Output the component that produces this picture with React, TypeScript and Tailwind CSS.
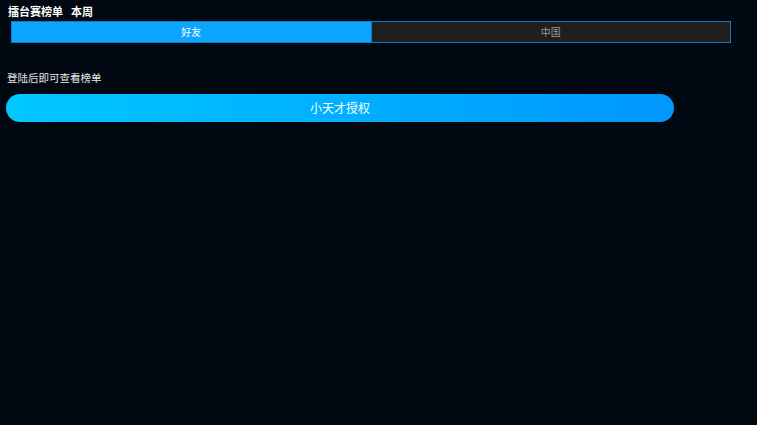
import { useState } from 'react';

type Scope = 'friends' | 'china';

const TABS: { id: Scope; label: string }[] = [
  { id: 'friends', label: '好友' },
  { id: 'china', label: '中国' },
];

export default function App() {
  const [scope, setScope] = useState<Scope>('friends');

  return (
    <div
      className="w-[757px] h-[425px] bg-[#020812] text-white flex flex-col overflow-hidden"
      style={{ fontFamily: '"Noto Sans CJK SC", "Noto Sans", sans-serif' }}
    >
      {/* ── Header ── */}
      <div className="pl-2 pt-[1px] h-[21px] flex items-center gap-[8px] text-[11px] font-bold leading-none">
        <span>擂台赛榜单</span>
        <span>本周</span>
      </div>

      {/* ── Scope tabs ── */}
      <div className="ml-[11px] w-[720px] h-[22px] flex border border-[#0b7cc8]">
        {TABS.map((tab) => {
          const active = scope === tab.id;
          return (
            <button
              key={tab.id}
              onClick={() => setScope(tab.id)}
              className={
                active
                  ? 'flex-1 flex items-center justify-center text-[10px] leading-none bg-[#0ea5fe] text-white'
                  : 'flex-1 flex items-center justify-center text-[10px] leading-none bg-[#1f1f1f] text-[#9a9a9a] border-l border-[#0b7cc8]'
              }
            >
              {tab.label}
            </button>
          );
        })}
      </div>

      {/* ── Login prompt ── */}
      <div className="mt-[30px] pl-[7px] text-[10.5px] leading-none text-[#e6e6e6]">登陆后即可查看榜单</div>

      <button className="mt-[10px] ml-[6px] w-[668px] h-[28px] rounded-full bg-gradient-to-r from-[#00c8ff] to-[#0096ff] text-[12px] text-white flex items-center justify-center">
        小天才授权
      </button>
    </div>
  );
}
